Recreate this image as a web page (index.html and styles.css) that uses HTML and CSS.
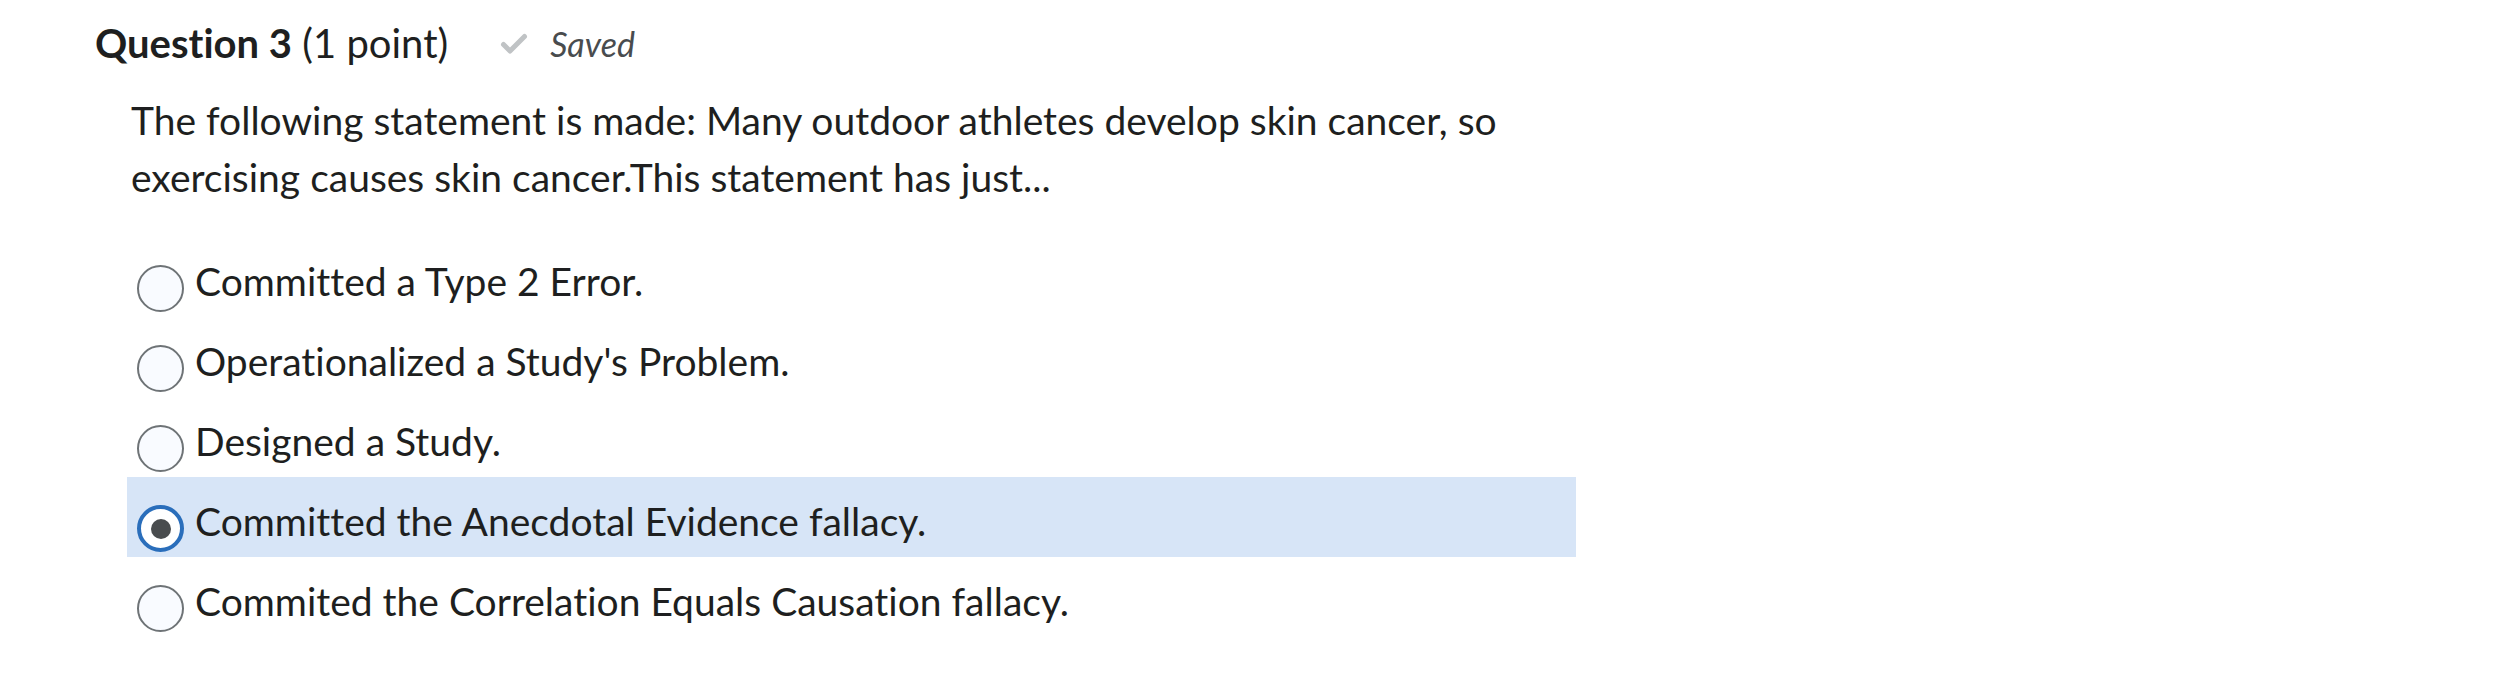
FILE: index.html
```html
<!DOCTYPE html>
<html lang="en">
<head>
<meta charset="utf-8">
<title>Question 3</title>
<link rel="stylesheet" href="styles.css">
</head>
<body>
<div class="question">
  <div class="q-header">
    <h2 class="q-title"><strong>Question 3</strong> (1 point)</h2>
    <span class="saved">
      <svg class="check" viewBox="0 0 28 22" width="28" height="22" aria-hidden="true"><path d="M3.5 11.5 L10 18 L24.5 3.5" fill="none" stroke="#c0c3c5" stroke-width="5" stroke-linecap="round" stroke-linejoin="round"/></svg>
      <em>Saved</em>
    </span>
  </div>
  <p class="q-text">The following statement is made: Many outdoor athletes develop skin cancer, so exercising causes skin cancer.This statement has just...</p>
  <div class="options">
    <label class="option"><span class="radio"></span><span class="opt-text">Committed a Type 2 Error.</span></label>
    <label class="option"><span class="radio"></span><span class="opt-text">Operationalized a Study's Problem.</span></label>
    <label class="option"><span class="radio"></span><span class="opt-text">Designed a Study.</span></label>
    <label class="option selected"><span class="radio checked"></span><span class="opt-text">Committed the Anecdotal Evidence fallacy.</span></label>
    <label class="option"><span class="radio"></span><span class="opt-text">Commited the Correlation Equals Causation fallacy.</span></label>
  </div>
</div>
</body>
</html>
```
FILE: styles.css
```css
html, body {
  margin: 0;
  padding: 0;
  background: #ffffff;
}
body {
  font-family: Lato, "Open Sans", "Liberation Sans", sans-serif;
  color: #1e1f20;
  font-variant-ligatures: none;
}
.question {
  padding: 20px 0 0 95px;
}
.q-header {
  display: flex;
  align-items: center;
  height: 46px;
}
.q-title {
  margin: 0;
  font-size: 40px;
  font-weight: 400;
  line-height: 46px;
  color: #1e1f20;
}
.q-title strong {
  font-weight: 700;
}
.saved {
  display: inline-flex;
  align-items: center;
  margin-left: 52px;
  color: #494c4e;
  font-size: 34px;
}
.saved .check {
  margin-right: 22px;
  margin-top: 2px;
}
.saved em {
  font-style: italic;
}
.q-text {
  margin: 26px 0 0 36px;
  width: 1440px;
  font-size: 39px;
  line-height: 57px;
}
.options {
  margin: 31px 0 0 32px;
  width: 1449px;
}
.option {
  display: flex;
  align-items: flex-start;
  height: 80px;
  box-sizing: border-box;
  padding: 16px 0 0 10px;
  font-size: 39px;
  line-height: 57px;
}
.option.selected {
  background: #d7e5f7;
}
.radio {
  flex: none;
  width: 47px;
  height: 47px;
  margin-top: 12px;
  margin-right: 11px;
  box-sizing: border-box;
  border: 2px solid #6e7376;
  border-radius: 50%;
  background: #f9fbff;
  display: flex;
  align-items: center;
  justify-content: center;
}
.radio.checked {
  border: 4px solid #2a6ebb;
  background: #ffffff;
}
.radio.checked::after {
  content: "";
  width: 20px;
  height: 20px;
  border-radius: 50%;
  background: #494c4e;
}
```
